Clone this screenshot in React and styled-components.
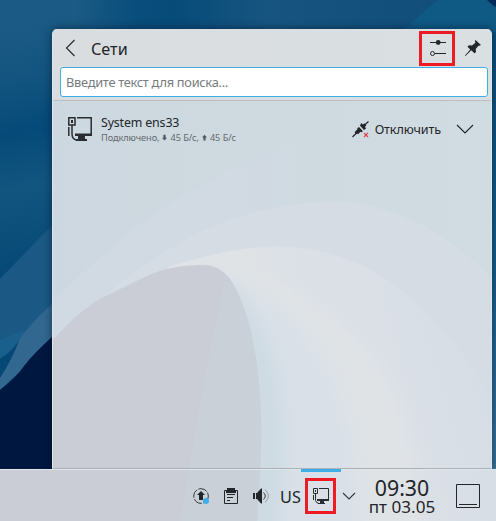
import React from "react";
import styled, { createGlobalStyle } from "styled-components";

const GlobalStyle = createGlobalStyle`
  * { box-sizing: border-box; }
  body { margin: 0; background: #0a4e7d; overflow: hidden; }
  button { font: inherit; color: inherit; border: 0; background: none; padding: 0; }
`;

const Desktop = styled.main`
  position: relative;
  isolation: isolate;
  width: 496px;
  height: 521px;
  display: flex;
  flex-direction: column;
  overflow: hidden;
  font-family: "Noto Sans", sans-serif;
  color: #232629;
`;

const Backdrop = styled.svg`
  position: absolute;
  inset: 0;
  width: 100%;
  height: 100%;
  z-index: -1;
  display: block;
`;

const Popup = styled.section`
  position: relative;
  isolation: isolate;
  margin: 29px 4px 0 52px;
  height: 440px;
  border-radius: 5px 5px 0 0;
  overflow: hidden;
  box-shadow: 0 0 9px rgba(0, 12, 35, 0.55);
  border-left: 1px solid #e0e5e9;
  border-right: 1px solid #e0e5e9;
  border-bottom: 1px solid #abb1b6;
`;

const PopupHeader = styled.header`
  height: 72px;
  padding: 0 1px 0 7px;
  background: linear-gradient(100deg, #d9dde0, #dadfe2);
  border-bottom: 1px solid #bbbfc2;
`;

const TitleRow = styled.div`
  height: 38px;
  display: flex;
  align-items: center;
`;

const IconButton = styled.button`
  display: flex;
  align-items: center;
  justify-content: center;
  width: ${(p) => p.$w}px;
  height: ${(p) => p.$h}px;
  border: ${(p) => (p.$marked ? "3px solid #ed1c24" : "0")};
  flex: none;
  svg { display: block; flex: none; }
`;

const Title = styled.h1`
  flex: 1;
  margin: 2px 0 0 9px;
  font-size: 16.2px;
  line-height: 22px;
  font-weight: 400;
`;

const Search = styled.input`
  display: block;
  width: 428px;
  height: 30px;
  padding: 0 5px 1px;
  border: 1px solid #3daee9;
  border-radius: 3px;
  background: #fff;
  outline: none;
  font: 12.8px "Noto Sans", sans-serif;
  letter-spacing: -0.27px;
  &::placeholder { color: #777c80; opacity: 1; }
`;

const Connection = styled.div`
  display: flex;
  align-items: center;
  height: 56px;
  padding: 0 17px 0 15px;
`;

const ConnectionText = styled.div`
  flex: 1;
  margin-left: 9px;
  white-space: nowrap;
`;

const Name = styled.div`
  font-size: 12.4px;
  line-height: 17px;
  letter-spacing: -0.15px;
`;

const Status = styled.div`
  display: flex;
  align-items: center;
  font-size: 9.2px;
  line-height: 13px;
  letter-spacing: -0.07px;
  color: #64696e;
  svg { margin: 0 3px; }
`;

const Disconnect = styled.button`
  display: flex;
  align-items: center;
  gap: 6px;
  margin-right: 15px;
  font-size: 12.6px;
  letter-spacing: -0.12px;
`;

const Taskbar = styled.footer`
  position: relative;
  isolation: isolate;
  display: flex;
  align-items: center;
  height: 52px;
  padding: 1px 15px 0 193px;
  border-top: 1px solid #e1e6e9;
`;

const Tray = styled.div`
  display: flex;
  align-items: center;
  gap: 15px;
  svg { display: block; }
`;

const Layout = styled.span`
  width: 23px;
  margin: 2px 0 0 10px;
  font-size: 16.3px;
  line-height: 24px;
`;

const ActiveMark = styled.span`
  position: absolute;
  top: -1px;
  left: 301px;
  width: 40px;
  height: 3px;
  background: #3daee9;
`;

const NetworkSlot = styled.div`
  margin: 0 6px 0 2px;
`;

const Clock = styled.div`
  display: flex;
  flex-direction: column;
  align-items: center;
  width: 70px;
  margin: 0 19px 0 11px;
  white-space: nowrap;
`;

const Time = styled.div`
  font-size: 21.3px;
  line-height: 21px;
`;

const DateLine = styled.div`
  font-size: 17.1px;
  line-height: 18px;
`;

function PaleWaves({ area, id }) {
  return (
    <Backdrop viewBox={area} preserveAspectRatio="none" aria-hidden="true">
      <defs>
        <linearGradient id={id + "sky"} x1="0" y1="0" x2="1" y2="0">
          <stop stopColor="#ccd7df" /><stop offset="1" stopColor="#d0dce1" />
        </linearGradient>
        <linearGradient id={id + "mid"} gradientUnits="userSpaceOnUse" x1="240" y1="0" x2="310" y2="0">
          <stop stopColor="#d1d9e2" /><stop offset="1" stopColor="#d1d9e2" stopOpacity="0" />
        </linearGradient>
        <linearGradient id={id + "tip"} gradientUnits="userSpaceOnUse" x1="200" y1="0" x2="300" y2="0">
          <stop stopColor="#dfe3e6" /><stop offset=".5" stopColor="#dfe3e6" /><stop offset="1" stopColor="#dfe3e6" stopOpacity="0" />
        </linearGradient>
        <linearGradient id={id + "east"} gradientUnits="userSpaceOnUse" x1="400" y1="400" x2="496" y2="370">
          <stop stopColor="#d5dce4" stopOpacity="0" /><stop offset="1" stopColor="#d5dde4" />
        </linearGradient>
        <filter id={id + "soft"} filterUnits="userSpaceOnUse" x="100" y="200" width="400" height="400"><feGaussianBlur stdDeviation="6" /></filter>
        <filter id={id + "haze"} filterUnits="userSpaceOnUse" x="100" y="200" width="400" height="400"><feGaussianBlur stdDeviation="10" /></filter>
      </defs>
      <path fill={`url(#${id}sky)`} d="M0 0H496V521H0Z" />
      <path fill={`url(#${id}mid)`} d="M52 300Q98 259 123 237Q180 191 248 162Q282 146 325 130V260L330 521H52Z" />
      <path fill="#d5dce4" d="M80 316Q140 263 200 232Q280 197 350 202Q432 215 492 279L496 283V521H80Z" />
      <path fill="#dbe0e7" d="M85 308Q180 255 250 248Q322 240 382 276Q440 313 492 398L496 404V521H80Z" />
      <path fill={`url(#${id}tip)`} d="M168 267Q205 255 251 248L300 247V320H220Z" />
      <path fill="#dfe3e6" filter={`url(#${id}soft)`} d="M224 262Q270 268 312 300Q354 328 383 370Q416 430 424 540H340Q350 400 280 320Z" />
      <path fill="#d9e0e7" filter={`url(#${id}haze)`} d="M230 278Q285 305 320 354Q360 420 360 550H220Z" />
      <path fill="#cfdbe3" filter={`url(#${id}soft)`} d="M226 280Q260 307 277 370Q291 440 278 540H220Z" />
      <path fill={`url(#${id}east)`} d="M382 276Q440 313 492 398L496 404V521H400Z" />
      <path fill="#cacdd6" d="M0 393L52 341Q84 305 108 295Q128 285 149 275Q175 264 204 265Q219 265 230 279Q249 309 256 359Q264 413 260 470L257 521H0Z" />
      <path fill="#cad1d9" opacity=".7" d="M226 275Q249 309 256 359Q264 413 260 470L257 521H180L195 435Q205 370 226 275Z" />
    </Backdrop>
  );
}

function Wallpaper() {
  return (
    <Backdrop viewBox="0 0 496 521" aria-hidden="true">
      <defs>
        <linearGradient id="sea" gradientUnits="userSpaceOnUse" x1="0" y1="30" x2="50" y2="270">
          <stop stopColor="#1b5a84" /><stop offset=".2" stopColor="#135580" /><stop offset=".42" stopColor="#064a79" />
          <stop offset=".65" stopColor="#12557f" /><stop offset="1" stopColor="#054876" />
        </linearGradient>
        <linearGradient id="shore" gradientUnits="userSpaceOnUse" x1="75" y1="0" x2="400" y2="0">
          <stop stopColor="#084d7b" stopOpacity="0" /><stop offset=".2" stopColor="#084d7b" />
          <stop offset=".3" stopColor="#074b79" /><stop offset=".6" stopColor="#175580" />
          <stop offset="1" stopColor="#124f7b" />
        </linearGradient>
        <linearGradient id="edge" x1="0" y1="0" x2="0" y2="1">
          <stop stopColor="#0a4f7c" /><stop offset=".55" stopColor="#14608e" /><stop offset="1" stopColor="#3a7297" />
        </linearGradient>
      </defs>
      <path fill="url(#sea)" d="M0 0H496V521H0Z" />
      <path fill="url(#shore)" d="M75 0H496V40H75Z" />
      <path fill="#1b5984" d="M0 279L52 225V306L0 359Z" />
      <path fill="#0f5985" d="M400 34Q420 14 438 0H496V60H400Z" />
      <path fill="#022b59" d="M487 0Q493 6 496 7V0Z" />
      <path fill="url(#edge)" d="M491 32H496V469H491Z" />
      <path fill="#326890" d="M0 378Q12 360 20 338Q36 318 52 304V342L0 390Z" />
      <path fill="#1b608c" d="M0 340L25 330Q13 353 0 358Z" />
      <path fill="#001740" d="M0 390Q16 378 24 366Q34 353 52 337V470H0Z" />
    </Backdrop>
  );
}

const Chevron = ({ dir }) => (
  <svg width="18" height="18" viewBox="0 0 18 18" fill="none" stroke="#232629" strokeWidth="1.1">
    <path d={dir === "left" ? "M12.5 1L4.5 9L12.5 17" : "M1 5L9 13L17 5"} />
  </svg>
);

const SmallChevron = () => (
  <svg width="14" height="10" viewBox="0 0 14 10" fill="none" stroke="#34383b" strokeWidth="1.1">
    <path d="M1 2L7 8L13 2" />
  </svg>
);

const Sliders = () => (
  <svg width="18" height="18" viewBox="0 0 18 18" fill="none" stroke="#232629">
    <path d="M2 3.5H18M7 14.5H18" />
    <circle cx="10.2" cy="3.5" r="2.4" fill="#232629" stroke="none" />
    <circle cx="4.5" cy="14.5" r="2" />
  </svg>
);

const Pin = () => (
  <svg width="18" height="18" viewBox="0 0 18 18" fill="#232629">
    <path d="M11.5 1L17 6L15.4 6.8L14.5 6.7L11.7 10.1L12 13L10.5 14.2L7.2 11.3L1.5 17L1 16.5L6.2 10.4L3.5 7.7L5 6.2L8 6.5L11.5 3.8L10.8 2Z" />
  </svg>
);

const Network = ({ size }) => (
  <svg width={size} height={size} viewBox={size === 24 ? "0 0 24 24" : "0 0 16 16"} fill="none" stroke="#292d31">
    {size === 24 ? (
      <>
        <path strokeWidth="1.5" d="M.8 .8H7V8H.8ZM9 .8H23.2V18M.8 10V19M4 8V17Q4 22.2 9 23.2" />
        <path fill="#292d31" stroke="none" d="M3 3H5V6H3ZM7 16.5H24V19H17V22H19V24H8V22H10V19H7Z" />
      </>
    ) : (
      <>
        <path d="M.5 .5H4.5V5.5H.5ZM6 .5H15.5V11M.5 7V12M2.5 5.5V12.5Q3 15 6 15.5M2.5 2V4" />
        <path fill="#292d31" stroke="none" d="M4 11H16V13H11V15H12V16H5V15H7V13H4Z" />
      </>
    )}
  </svg>
);

const Unplug = () => (
  <svg width="17" height="17" viewBox="0 0 17 17">
    <path stroke="#232629" strokeWidth="1.2" d="M.5 16L5 11.5M11.5 5L16.5 .5" />
    <path fill="#232629" d="M9.2 2.1L11 3.5L12.2 2.3L14.3 4.5L13 5.8L14 7.6L12 9L8 4.7ZM7 6L11 10.2L9.3 11.3L8.4 10.8L6.2 13.2L5 12.5L4 13.2L2.7 11.5L3.4 10.2L5.6 8.1L5.2 7.2Z" />
    <path stroke="#da4453" strokeWidth="1.2" d="M12 11.8L16 16M16 11.8L12 16" />
  </svg>
);

const Arrow = ({ up }) => (
  <svg width="5" height="8" viewBox="0 0 6 8" fill="#50565a">
    <path d={up ? "M3 0L6 3.3H4.3V7H1.7V3.3H0Z" : "M1.7 0H4.3V3.8H6L3 7L0 3.8H1.7Z"} />
  </svg>
);

const Updates = () => (
  <svg width="16" height="16" viewBox="0 0 16 16" fill="none">
    <circle cx="8" cy="8" r="7.3" stroke="#34383b" strokeWidth="1" strokeDasharray="9 1.5" />
    <path fill="#232629" d="M8 3L12 7H10V12H6V7H4Z" />
    <circle cx="13" cy="13" r="3" fill="#3daee9" />
  </svg>
);

const Clipboard = () => (
  <svg width="14" height="16" viewBox="0 0 14 16">
    <path fill="none" stroke="#232629" d="M.5 2.5H13.5V15.5H.5ZM3 6.5H11M3 9.5H9M3 12.5H6" />
    <path fill="#232629" d="M3 0H11V2H12V5H2V2H3Z" />
  </svg>
);

const Volume = () => (
  <svg width="17" height="16" viewBox="0 0 17 16" fill="none">
    <path fill="#232629" d="M0 5H2V11H0ZM3 5H4L8 .5H9V15.5H8L4 11H3Z" />
    <path stroke="#34383b" d="M10.5 4.5Q14 8 10.5 11.5" />
    <path stroke="#999fa4" d="M12 1.5Q19 8 12 14.5" />
  </svg>
);

const ShowDesktop = () => (
  <svg width="24" height="24" viewBox="0 0 24 24" fill="none" stroke="#232629">
    <path d="M.5 .5H23.5V23.5H.5ZM3 20.5H21" />
  </svg>
);

export default function App() {
  return (
    <Desktop>
      <GlobalStyle />
      <Wallpaper />
      <Popup>
        <PaleWaves area="53 29 438 439" id="popup" />
        <PopupHeader>
          <TitleRow>
            <IconButton $w={22} $h={30} aria-label="Назад"><Chevron dir="left" /></IconButton>
            <Title>Сети</Title>
            <IconButton $w={36} $h={35} $marked aria-label="Настроить"><Sliders /></IconButton>
            <IconButton $w={35} $h={34} aria-label="Закрепить"><Pin /></IconButton>
          </TitleRow>
          <Search placeholder="Введите текст для поиска..." />
        </PopupHeader>
        <Connection>
          <Network size={24} />
          <ConnectionText>
            <Name>System ens33</Name>
            <Status>Подключено, <Arrow /> 45 Б/с, <Arrow up /> 45 Б/с</Status>
          </ConnectionText>
          <Disconnect><Unplug />Отключить</Disconnect>
          <Chevron />
        </Connection>
      </Popup>
      <Taskbar>
        <PaleWaves area="0 469 496 52" id="bar" />
        <ActiveMark />
        <Tray><Updates /><Clipboard /><Volume /></Tray>
        <Layout>US</Layout>
        <NetworkSlot><IconButton $w={31} $h={36} $marked aria-label="Сети"><Network size={16} /></IconButton></NetworkSlot>
        <SmallChevron />
        <Clock><Time>09:30</Time><DateLine>пт 03.05</DateLine></Clock>
        <ShowDesktop />
      </Taskbar>
    </Desktop>
  );
}
